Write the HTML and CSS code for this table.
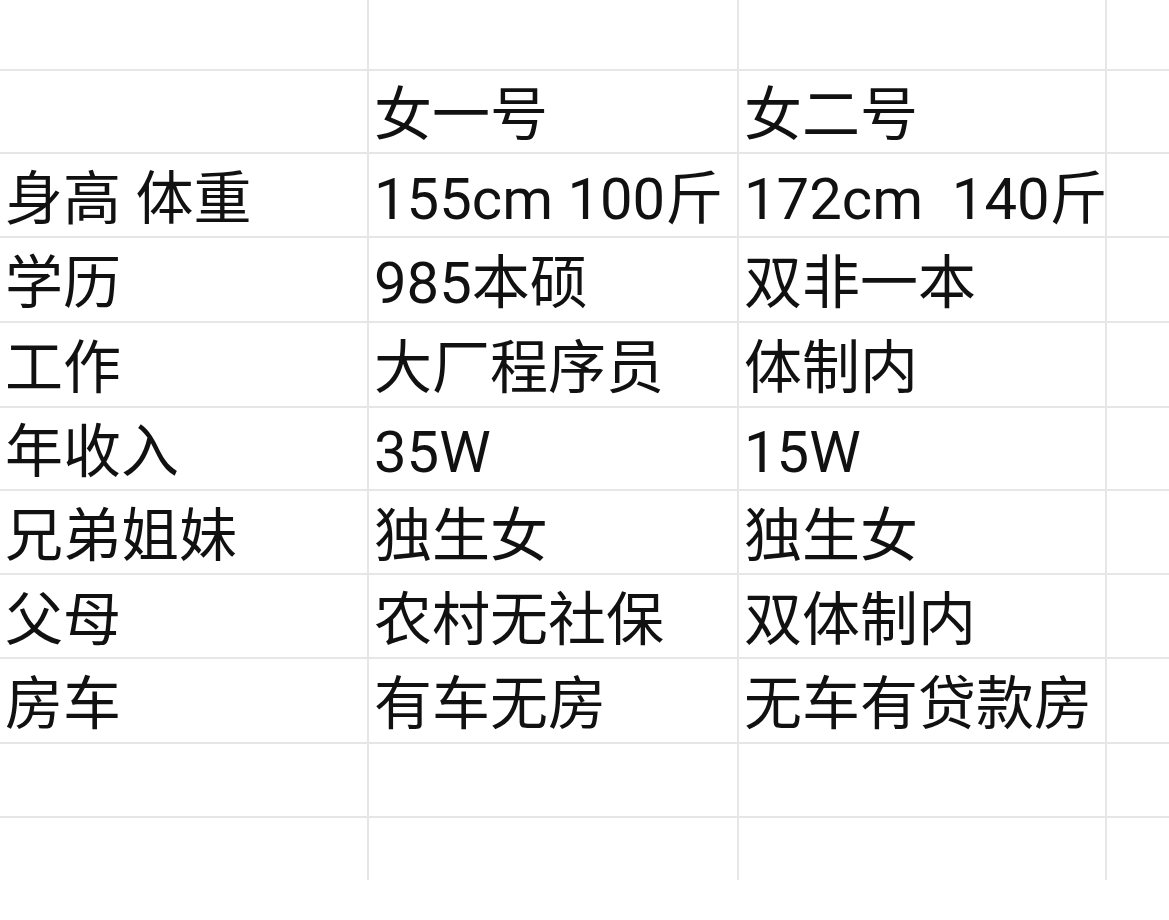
FILE: index.html
```html
<!DOCTYPE html>
<html lang="zh-CN">
<head>
<meta charset="utf-8">
<title>对比表</title>
<link rel="stylesheet" href="styles.css">
</head>
<body>
<div class="sheet">
  <div class="cell r-top"></div><div class="cell r-top"></div><div class="cell r-top"></div><div class="cell r-top"></div>

  <div class="cell"></div><div class="cell">女一号</div><div class="cell">女二号</div><div class="cell"></div>
  <div class="cell">身高 体重</div><div class="cell">155cm 100斤</div><div class="cell">172cm  140斤</div><div class="cell"></div>
  <div class="cell">学历</div><div class="cell">985本硕</div><div class="cell">双非一本</div><div class="cell"></div>
  <div class="cell">工作</div><div class="cell">大厂程序员</div><div class="cell">体制内</div><div class="cell"></div>
  <div class="cell">年收入</div><div class="cell">35W</div><div class="cell">15W</div><div class="cell"></div>
  <div class="cell">兄弟姐妹</div><div class="cell">独生女</div><div class="cell">独生女</div><div class="cell"></div>
  <div class="cell">父母</div><div class="cell">农村无社保</div><div class="cell">双体制内</div><div class="cell"></div>
  <div class="cell">房车</div><div class="cell">有车无房</div><div class="cell">无车有贷款房</div><div class="cell"></div>
  <div class="cell"></div><div class="cell"></div><div class="cell"></div><div class="cell"></div>
  <div class="cell"></div><div class="cell"></div><div class="cell"></div><div class="cell"></div>
</div>
</body>
</html>
```

FILE: styles.css
```css
html, body {
  margin: 0;
  padding: 0;
  background: #ffffff;
}

body {
  width: 1169px;
  height: 920px;
  overflow: hidden;
  font-family: Roboto, "Noto Sans CJK SC", sans-serif;
  font-weight: 400;
  color: #111111;
}

.sheet {
  display: grid;
  grid-template-columns: 367px 368px 366px 62px;
  grid-template-rows: 69px 81px 82px 83px 83px 81px 82px 82px 83px 72px 62px;
  gap: 2px;
  background: #e6e6e6;
  width: 1169px;
}

.cell {
  background: #ffffff;
  display: flex;
  align-items: center;
  padding: 7px 0 0 5px;
  font-size: 58px;
  line-height: 1;
  white-space: pre;
  overflow: visible;
  box-sizing: border-box;
}
```
